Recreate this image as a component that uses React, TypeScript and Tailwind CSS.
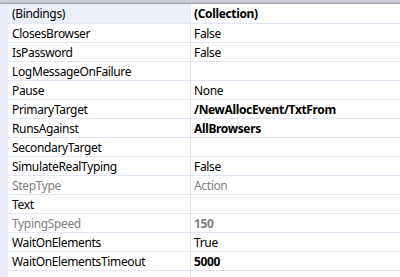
import React from "react";

type Row = { name: string; value: string; bold?: boolean; gray?: boolean; sel?: boolean };

const rows: Row[] = [
  { name: "(Bindings)", value: "(Collection)", bold: true, sel: true },
  { name: "ClosesBrowser", value: "False" },
  { name: "IsPassword", value: "False" },
  { name: "LogMessageOnFailure", value: "" },
  { name: "Pause", value: "None" },
  { name: "PrimaryTarget", value: "/NewAllocEvent/TxtFrom", bold: true },
  { name: "RunsAgainst", value: "AllBrowsers", bold: true },
  { name: "SecondaryTarget", value: "" },
  { name: "SimulateRealTyping", value: "False" },
  { name: "StepType", value: "Action", gray: true },
  { name: "Text", value: "" },
  { name: "TypingSpeed", value: "150", gray: true, bold: true },
  { name: "WaitOnElements", value: "True" },
  { name: "WaitOnElementsTimeout", value: "5000", bold: true },
];

export default function App() {
  return (
    <div
      className="w-[400px] h-[277px] bg-white overflow-hidden flex flex-col text-[12px] tracking-[-0.35px] text-black"
      style={{ fontFamily: '"Noto Sans", "Open Sans", sans-serif' }}
    >
      <div className="h-[4px] shrink-0 bg-gradient-to-b from-[#d4d6dc] to-[#b9bcc4] border-b border-[#a6a9b1]" />
      <div className="flex flex-1">
        <div className="w-[8px] bg-[#e9ebf7] shrink-0" />
        <div className="flex-1 flex flex-col">
          {rows.map((r, i) => (
            <div
              key={r.name}
              className={`flex border-b border-[#e3e6f6] ${i === 0 ? "h-[20px]" : "h-[19px]"}`}
            >
              <div
                className={`w-[183px] shrink-0 flex items-center pl-[4px] pt-[1px] border-r border-[#e3e6f6] leading-none ${
                  r.sel ? "bg-[#eceef8]" : ""
                } ${r.gray ? "text-[#808080]" : ""}`}
              >
                {r.name}
              </div>
              <div
                className={`flex-1 flex items-center pl-[3px] pt-[1px] leading-none ${r.bold ? "font-bold" : ""} ${
                  r.gray ? "text-[#808080]" : ""
                }`}
              >
                {r.value}
              </div>
            </div>
          ))}
          <div className="flex flex-1">
            <div className="w-[183px] shrink-0 border-r border-[#e3e6f6]" />
          </div>
        </div>
      </div>
    </div>
  );
}
